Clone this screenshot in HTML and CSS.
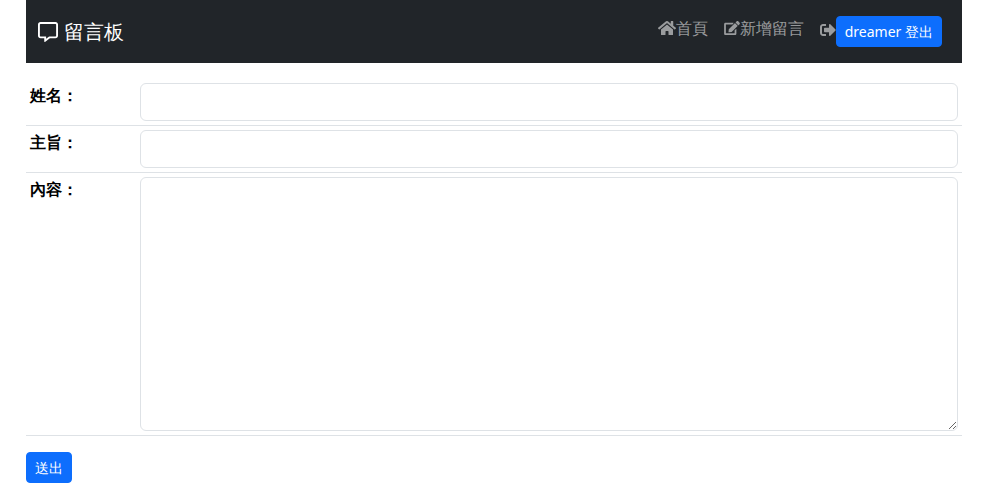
FILE: index.html
```html
<!DOCTYPE html>
<html lang="zh-Hant">
<head>
    <meta charset="UTF-8">
    <title>留言板</title>
    <link rel="stylesheet" href="styles.css">
</head>
<body>
    <div class="container">
        <nav class="navbar">
            <a class="brand" href="#">
                <svg class="brand-icon" viewBox="0 0 512 512"><path d="M448 0H64C28.7 0 0 28.7 0 64v288c0 35.3 28.7 64 64 64h96v84c0 7.1 5.8 12 12 12 2.4 0 4.9-.7 7.1-2.4L304 416h144c35.3 0 64-28.7 64-64V64c0-35.3-28.7-64-64-64zm16 352c0 8.8-7.2 16-16 16H288l-12.8 9.6L208 428v-60H64c-8.8 0-16-7.2-16-16V64c0-8.8 7.2-16 16-16h384c8.8 0 16 7.2 16 16v288z"/></svg>
                留言板
            </a>
            <div class="nav-links">
                <a class="nav-link" href="#">
                    <svg class="icon" viewBox="0 0 576 512"><path d="M280.37 148.26L96 300.11V464a16 16 0 0 0 16 16l112.06-.29a16 16 0 0 0 15.92-16V368a16 16 0 0 1 16-16h64a16 16 0 0 1 16 16v95.64a16 16 0 0 0 16 16.05L464 480a16 16 0 0 0 16-16V300L295.67 148.26a12.19 12.19 0 0 0-15.3 0zM571.6 251.47L488 182.56V44.05a12 12 0 0 0-12-12h-56a12 12 0 0 0-12 12v72.61L318.47 43a48 48 0 0 0-61 0L4.34 251.47a12 12 0 0 0-1.6 16.9l25.5 31A12 12 0 0 0 45.15 301l235.22-193.74a12.19 12.19 0 0 1 15.3 0L530.9 301a12 12 0 0 0 16.9-1.6l25.5-31a12 12 0 0 0-1.7-16.93z"/></svg>首頁</a>
                <a class="nav-link" href="#">
                    <svg class="icon icon-edit" viewBox="0 0 576 512"><path d="M402.6 83.2l90.2 90.2c3.8 3.8 3.8 10 0 13.8L274.4 405.6l-92.8 10.3c-12.4 1.4-22.9-9.1-21.5-21.5l10.3-92.8L388.8 83.2c3.8-3.8 10-3.8 13.8 0zm162-22.9l-48.8-48.8c-15.2-15.2-39.9-15.2-55.2 0l-35.4 35.4c-3.8 3.8-3.8 10 0 13.8l90.2 90.2c3.8 3.8 10 3.8 13.8 0l35.4-35.4c15.2-15.3 15.2-40 0-55.2zM384 346.2V448H64V128h229.8c3.2 0 6.2-1.3 8.5-3.5l40-40c7.6-7.6 2.2-20.5-8.5-20.5H48C21.5 64 0 85.5 0 112v352c0 26.5 21.5 48 48 48h352c26.5 0 48-21.5 48-48V306.2c0-10.7-12.9-16-20.5-8.5l-40 40c-2.2 2.3-3.5 5.3-3.5 8.5z"/></svg>新增留言</a>
                <div class="nav-user">
                    <svg class="icon icon-exit" viewBox="0 0 512 512"><path d="M497 273L329 441c-15 15-41 4.5-41-17v-96H152c-13.3 0-24-10.7-24-24v-96c0-13.3 10.7-24 24-24h136V88c0-21.4 25.9-32 41-17l168 168c9.3 9.4 9.3 24.6 0 34zM192 436v-40c0-6.6-5.4-12-12-12H96c-17.7 0-32-14.3-32-32V160c0-17.7 14.3-32 32-32h84c6.6 0 12-5.4 12-12V76c0-6.6-5.4-12-12-12H96c-53 0-96 43-96 96v192c0 53 43 96 96 96h84c6.6 0 12-5.4 12-12z"/></svg>
                    <a class="btn" href="#">dreamer 登出</a>
                </div>
            </div>
        </nav>

        <form class="message-form">
            <div class="form-row">
                <label class="form-label">姓名：</label>
                <input class="form-control" type="text">
            </div>
            <div class="form-row">
                <label class="form-label">主旨：</label>
                <input class="form-control" type="text">
            </div>
            <div class="form-row">
                <label class="form-label">內容：</label>
                <textarea class="form-control form-textarea"></textarea>
            </div>
            <button class="btn btn-submit" type="button">送出</button>
        </form>
    </div>
</body>
</html>
```

FILE: styles.css
```css
* {
    box-sizing: border-box;
}

body {
    margin: 0;
    background: #fff;
    color: #212529;
    font-family: "Noto Sans", sans-serif;
    font-size: 16px;
    line-height: 24px;
}

a {
    text-decoration: none;
}

.container {
    width: 936px;
    margin-left: 26px;
}

/* Navbar */
.navbar {
    display: flex;
    justify-content: space-between;
    align-items: center;
    height: 63px;
    padding: 0 20px 0 12px;
    background: #212529;
}

.brand {
    display: flex;
    align-items: center;
    gap: 6px;
    color: #fff;
    font-size: 20px;
    line-height: 30px;
}

.brand-icon {
    width: 20px;
    height: 20px;
    fill: #fff;
}

.nav-links {
    display: flex;
    align-items: center;
    gap: 16px;
}

.nav-link {
    display: flex;
    align-items: center;
    margin-top: -7px;
    color: rgba(255, 255, 255, 0.55);
}

.icon {
    width: 18px;
    height: 16px;
    fill: rgba(255, 255, 255, 0.55);
}

.icon-edit {
    width: 16px;
    height: 14px;
}

.nav-user {
    display: flex;
    align-items: center;
}

.icon-exit {
    width: 16px;
    margin-top: -3px;
}

.btn {
    display: inline-block;
    padding: 3px 8px;
    border: 1px solid #0d6efd;
    border-radius: 4px;
    background: #0d6efd;
    color: #fff;
    font-family: inherit;
    font-size: 14px;
    line-height: 23px;
}

/* Form */
.message-form {
    margin-top: 16px;
}

.form-row {
    display: flex;
    padding: 4px;
    border-bottom: 1px solid #dee2e6;
}

.form-label {
    flex: none;
    width: 110px;
    color: #000;
    font-weight: 700;
}

.form-control {
    display: block;
    flex: 1;
    height: 38px;
    padding: 6px 12px;
    border: 1px solid #dee2e6;
    border-radius: 6px;
    background: #fff;
    font: inherit;
}

.form-textarea {
    height: 254px;
}

.btn-submit {
    display: block;
    margin-top: 16px;
}
```
